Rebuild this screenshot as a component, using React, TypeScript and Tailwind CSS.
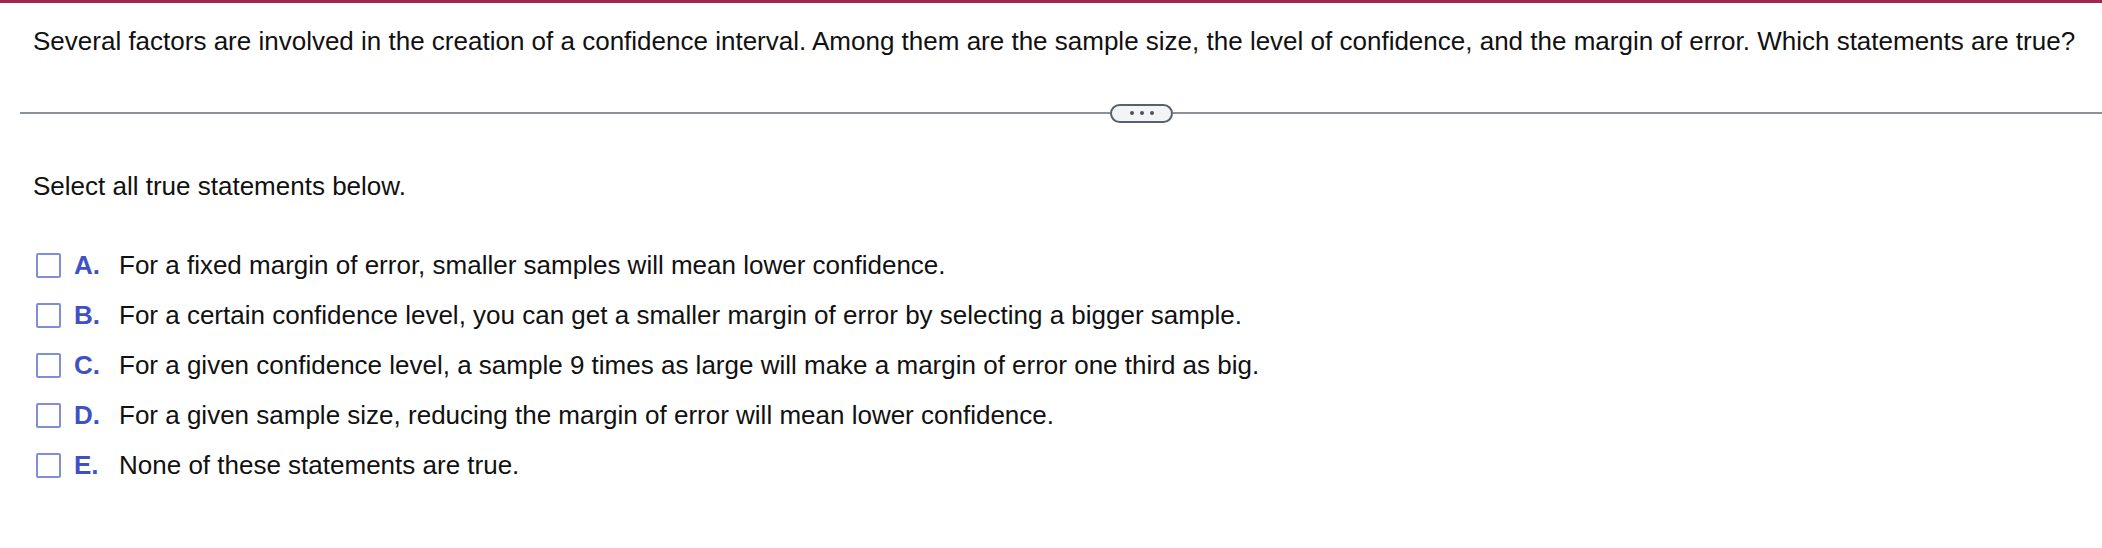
import React from "react";

const options = [
  { key: "A.", text: "For a fixed margin of error, smaller samples will mean lower confidence." },
  { key: "B.", text: "For a certain confidence level, you can get a smaller margin of error by selecting a bigger sample." },
  { key: "C.", text: "For a given confidence level, a sample 9 times as large will make a margin of error one third as big." },
  { key: "D.", text: "For a given sample size, reducing the margin of error will mean lower confidence." },
  { key: "E.", text: "None of these statements are true." },
];

export default function App() {
  return (
    <div
      className="w-[2102px] h-[548px] bg-white text-[#111] overflow-hidden"
      style={{ fontFamily: '"Liberation Sans", Arial, Helvetica, sans-serif' }}
    >
      <div className="h-[3px] bg-[#a3264f]" />
      <p className="mt-[23px] pl-[33px] text-[26px] leading-[30px] whitespace-nowrap">
        Several factors are involved in the creation of a confidence interval. Among them are the sample size, the level of confidence, and the margin of error. Which statements are true?
      </p>
      <div className="mt-[48px] pl-[20px] flex items-center h-[18px]">
        <div className="w-[1090px] h-[2px] bg-[#8a919d]" />
        <div className="w-[63px] h-[19px] rounded-full border-2 border-[#56616d] bg-[#f3f4f6] flex items-center justify-center gap-[6px] shrink-0">
          <span className="w-[4px] h-[4px] rounded-full bg-[#4a535e]" />
          <span className="w-[4px] h-[4px] rounded-full bg-[#4a535e]" />
          <span className="w-[4px] h-[4px] rounded-full bg-[#4a535e]" />
        </div>
        <div className="flex-1 h-[2px] bg-[#8a919d]" />
      </div>
      <p className="mt-[49px] pl-[33px] text-[26px] leading-[30px]">Select all true statements below.</p>
      <div className="mt-[49px] pl-[36px] flex flex-col gap-[20px]">
        {options.map((o) => (
          <div key={o.key} className="flex items-center h-[30px] text-[26px] leading-[30px] whitespace-nowrap">
            <span className="w-[25px] h-[25px] border-2 border-[#7f8ed8] rounded-[2px] bg-white shrink-0" />
            <span className="ml-[13px] w-[45px] font-bold text-[#3f51c4] shrink-0">{o.key}</span>
            <span>{o.text}</span>
          </div>
        ))}
      </div>
    </div>
  );
}
